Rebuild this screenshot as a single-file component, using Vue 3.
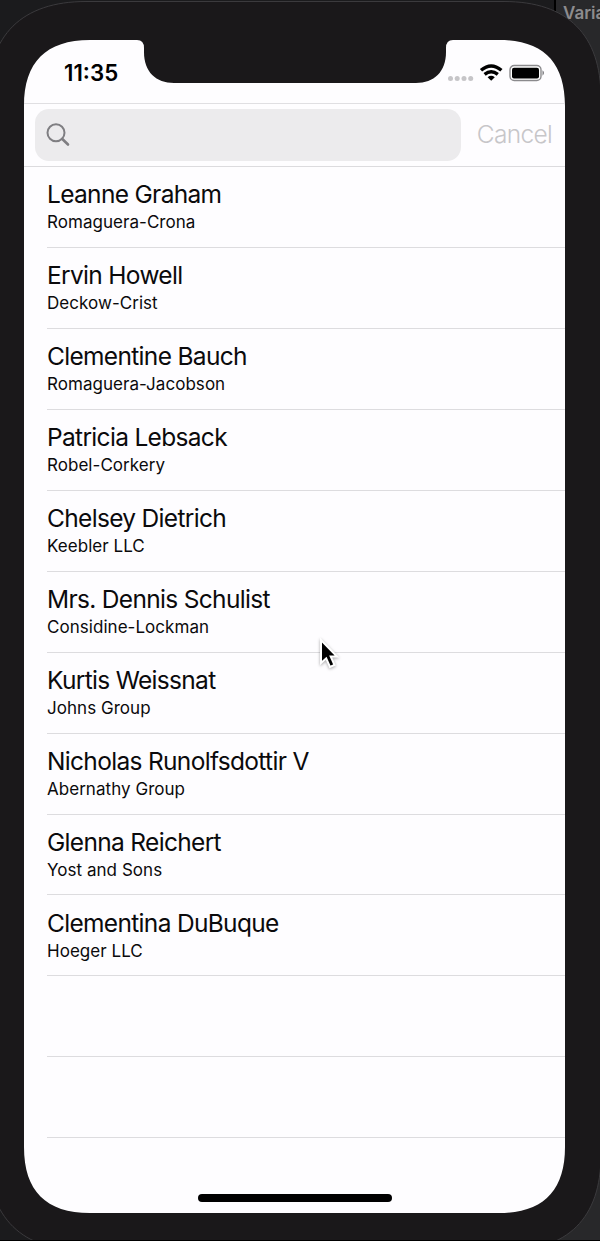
<script setup>
const people = [
  { name: 'Leanne Graham', company: 'Romaguera-Crona' },
  { name: 'Ervin Howell', company: 'Deckow-Crist' },
  { name: 'Clementine Bauch', company: 'Romaguera-Jacobson' },
  { name: 'Patricia Lebsack', company: 'Robel-Corkery' },
  { name: 'Chelsey Dietrich', company: 'Keebler LLC' },
  { name: 'Mrs. Dennis Schulist', company: 'Considine-Lockman' },
  { name: 'Kurtis Weissnat', company: 'Johns Group' },
  { name: 'Nicholas Runolfsdottir V', company: 'Abernathy Group' },
  { name: 'Glenna Reichert', company: 'Yost and Sons' },
  { name: 'Clementina DuBuque', company: 'Hoeger LLC' },
  {},
  {},
]
</script>

<template>
  <div class="desktop">
    <span class="behind">Varia</span>
    <svg class="device" width="600" height="1241" viewBox="0 0 600 1241">
      <path class="shell" d="M-12 98C-12 35 22 1.500 86 1.500H504C568 1.500 601 35 601 98V1155C601 1218 568 1251 504 1251H86C22 1251-12 1218-12 1155Z" />
      <path class="glass" d="M24 106C24 62 46 40 90 40H137Q144 40 144 48V52C144 72 156 83 174 83H416C434 83 446 72 446 52V48Q446 40 453 40H499C543 40 565 62 565 106V1147C565 1191 543 1213 499 1213H90C46 1213 24 1191 24 1147Z" />
      <path d="M0 1240.500H600" stroke="#000" />
    </svg>

    <main class="screen">
      <header class="status">
        <span class="time">11:35</span>
        <svg class="indicators" width="100" height="20" viewBox="0 0 100 20">
          <g fill="#c6c5c8">
            <circle cx="3.500" cy="15.500" r="2.500" /><circle cx="10.200" cy="15.500" r="2.500" />
            <circle cx="17" cy="15.500" r="2.500" /><circle cx="23.700" cy="15.500" r="2.500" />
          </g>
          <g fill="none" stroke="#000" stroke-width="3.400">
            <path d="M34 7.300Q44.200 -1.400 54.400 7.300" />
            <path d="M37.600 11.400Q44.200 6 50.800 11.400" />
          </g>
          <path d="M40.600 14.200Q44.200 11.400 47.800 14.200L44.200 17.700Z" />
          <rect x="63" y="2.500" width="31" height="15" rx="4.200" fill="#fff" stroke="#8b8a8d" stroke-width="1.400" />
          <rect x="65" y="4.700" width="27" height="10.800" rx="2" />
          <path d="M95.500 7.300Q98.500 10 95.500 12.700Z" fill="#77767a" />
        </svg>
      </header>

      <section class="search">
        <div class="field">
          <svg width="26" height="26" viewBox="0 0 26 26" fill="none" stroke="#7f7e82">
            <circle cx="10" cy="10.800" r="8.500" stroke-width="2" />
            <path d="M16.300 17L22 22.500" stroke-width="2.600" stroke-linecap="round" />
          </svg>
        </div>
        <span class="cancel">Cancel</span>
      </section>

      <ul class="list">
        <li v-for="(person, i) in people" :key="i">
          <div class="name">{{ person.name }}</div>
          <div class="company">{{ person.company }}</div>
        </li>
      </ul>
      <div class="home"></div>
    </main>

    <svg class="pointer" width="26" height="36" viewBox="0 0 26 36">
      <path d="M4 3V26L9.200 21.300L13 30L17.500 28L13.700 19.600H20Z" fill="#000" stroke="#fff" stroke-width="2" />
    </svg>
  </div>
</template>

<style>
body { background: #1b1a1c; }
</style>

<style scoped>
.desktop {
  position: relative;
  width: 600px;
  height: 1241px;
  overflow: hidden;
  background: linear-gradient(90deg, #1b1b1d 0 554px, #000 554px 556px, #28282a 556px);
  font-family: Inter, "Liberation Sans", sans-serif;
}
.behind {
  position: absolute;
  left: 563px;
  top: 3px;
  font-size: 17px;
  line-height: 20px;
  font-weight: 600;
  color: #8d8c8e;
}
.device { position: absolute; inset: 0; }
.shell { fill: #1a181a; stroke: #3b3a3d; }
.glass { fill: #fefdff; }
.screen {
  position: relative;
  display: flex;
  flex-direction: column;
  margin-left: 24px;
  padding-top: 40px;
  width: 541px;
  height: 1213px;
  box-sizing: border-box;
}
.status {
  box-sizing: border-box;
  height: 64px;
  border-bottom: 1px solid #e0dfe2;
  display: flex;
  justify-content: space-between;
  align-items: flex-start;
  padding: 19px 18px 0 40px;
}
.time { font-size: 22.3px; line-height: 28px; font-weight: 600; color: #000; }
.indicators { margin-top: 4px; }
.search {
  box-sizing: border-box;
  height: 63px;
  border-bottom: 1px solid #dcdbde;
  display: flex;
  align-items: center;
  padding: 0 13px 0 11px;
  justify-content: space-between;
}
.field {
  width: 426px;
  height: 52px;
  border-radius: 14px;
  background: #ecebed;
  display: flex;
  align-items: center;
  padding-left: 11px;
  box-sizing: border-box;
}
.cancel { font-size: 24.5px; line-height: 30px; margin-top: -2px; letter-spacing: -0.7px; font-weight: 350; color: #c7c6c9; }
.list { list-style: none; margin: 0; padding: 0 0 0 23px; }
.list li {
  box-sizing: border-box;
  height: 80.95px;
  padding-top: 12.200px;
  border-bottom: 1px solid #dddcdf;
  color: #0b0a0c;
  white-space: nowrap;
}
.name { font-size: 24.5px; line-height: 30px; letter-spacing: -0.68px; }
.company { font-size: 17px; line-height: 27px; letter-spacing: 0.04px; }
.home {
  width: 194px;
  height: 8px;
  border-radius: 4px;
  background: #000;
  margin: auto auto 11px 174px;
}
.pointer {
  position: absolute;
  left: 317px;
  top: 637px;
  filter: drop-shadow(0 1px 1.500px rgba(0, 0, 0, 0.35));
}
</style>
